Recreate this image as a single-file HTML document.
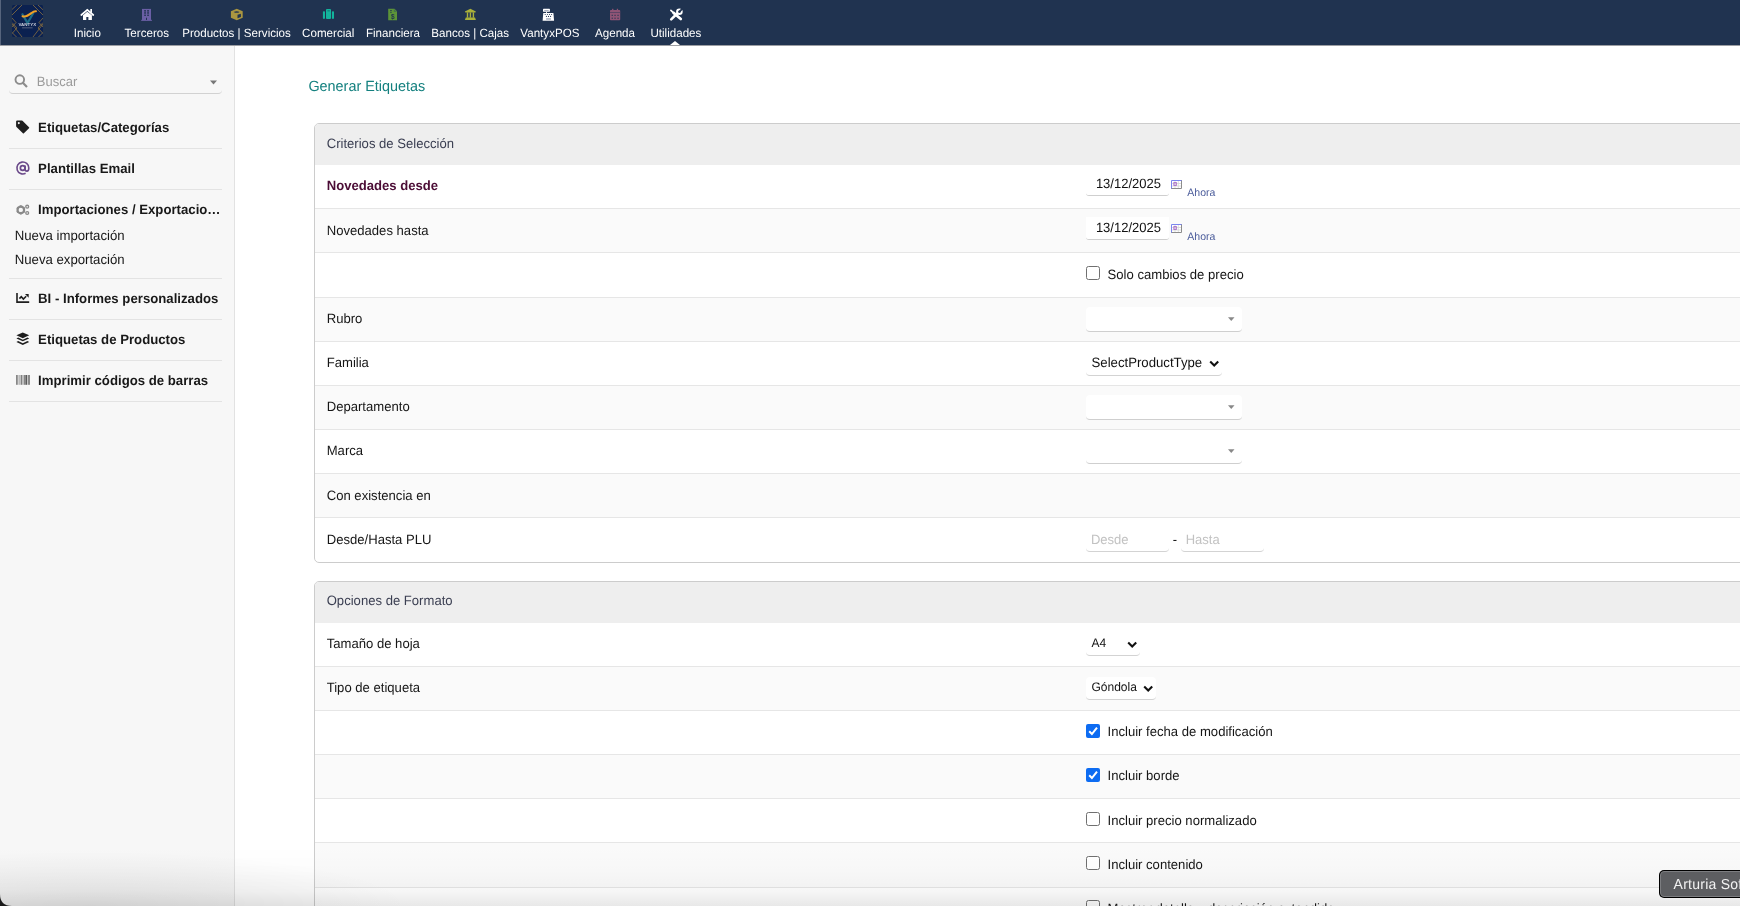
<!DOCTYPE html>
<html><head><meta charset="utf-8">
<style>
*{box-sizing:border-box;margin:0;padding:0}
html,body{width:1740px;height:906px;overflow:hidden;background:#fff;font-family:"Liberation Sans",sans-serif;color:#222;position:relative}
.a{position:absolute}
.t{position:absolute;white-space:nowrap;line-height:20px;text-rendering:geometricPrecision}
svg{display:block}
</style></head><body>
<div id="root" style="position:absolute;left:0;top:0;width:1740px;height:906px;will-change:transform">
<div class="a" style="left:0px;top:0px;width:1740px;height:45px;background:#203350"></div>
<div class="a" style="left:0px;top:45px;width:1740px;height:1px;background:#9c9ea3"></div>
<div class="a" style="left:0px;top:0px;width:1px;height:45px;background:#56647c"></div>
<svg class="a" style="left:12px;top:5px" width="31" height="32" viewBox="0 0 31 32">
<rect x="0" y="0" width="31" height="32" rx="1.5" fill="#0b2150"/>
<g stroke="#9c7b3c" stroke-width="0.7" fill="none">
<path d="M0 4.5 L4.8 0 M0 10 L10 0 M21 0 L31 10 M26 0 L31 4.8 M0 27.5 L4.5 32 M0 19 L10 32 M21 32 L31 19 M26.5 32 L31 27.5"/>
<path d="M0 13 L4 17.5 L0 22 M0 17.5 L5 23 L0 28.5 M31 13 L27 17.5 L31 22 M31 17.5 L26 23 L31 28.5"/>
</g>
<path d="M10 8.5 L15.5 18 L21.5 7.8" stroke="#1d6b86" stroke-width="2.2" fill="none" stroke-linejoin="miter"/>
<path d="M10.5 11.2 C14 12.5 17 10 19.5 8 C21 6.8 22.5 6 24 6.3" stroke="#f0a126" stroke-width="2" fill="none" stroke-linecap="round"/>
<text x="15.3" y="21" font-family="Liberation Sans" font-weight="bold" font-size="3.4" fill="#c8ccd8" text-anchor="middle" textLength="17.6" lengthAdjust="spacingAndGlyphs">VANTYX</text><rect x="10" y="22.4" width="10.6" height="0.9" fill="#5c6584"/>
</svg>
<div class="t" style="left:-62.70px;width:300px;text-align:center;top:23.58px;font-size:11.6px;font-weight:normal;color:#ffffff;transform:scaleY(1.03);transform-origin:0 14.02px;">Inicio</div>
<div class="t" style="left:-3.20px;width:300px;text-align:center;top:23.58px;font-size:11.6px;font-weight:normal;color:#ffffff;transform:scaleY(1.03);transform-origin:0 14.02px;">Terceros</div>
<div class="t" style="left:86.50px;width:300px;text-align:center;top:23.58px;font-size:11.6px;font-weight:normal;color:#ffffff;transform:scaleY(1.03);transform-origin:0 14.02px;">Productos | Servicios</div>
<div class="t" style="left:178.20px;width:300px;text-align:center;top:23.58px;font-size:11.6px;font-weight:normal;color:#ffffff;transform:scaleY(1.03);transform-origin:0 14.02px;">Comercial</div>
<div class="t" style="left:243.00px;width:300px;text-align:center;top:23.58px;font-size:11.6px;font-weight:normal;color:#ffffff;transform:scaleY(1.03);transform-origin:0 14.02px;">Financiera</div>
<div class="t" style="left:320.20px;width:300px;text-align:center;top:23.58px;font-size:11.6px;font-weight:normal;color:#ffffff;transform:scaleY(1.03);transform-origin:0 14.02px;">Bancos | Cajas</div>
<div class="t" style="left:399.90px;width:300px;text-align:center;top:23.58px;font-size:11.6px;font-weight:normal;color:#ffffff;transform:scaleY(1.03);transform-origin:0 14.02px;">VantyxPOS</div>
<div class="t" style="left:465.00px;width:300px;text-align:center;top:23.58px;font-size:11.6px;font-weight:normal;color:#ffffff;transform:scaleY(1.03);transform-origin:0 14.02px;">Agenda</div>
<div class="t" style="left:525.90px;width:300px;text-align:center;top:23.58px;font-size:11.6px;font-weight:normal;color:#ffffff;transform:scaleY(1.03);transform-origin:0 14.02px;">Utilidades</div>
<svg class="a" style="left:79px;top:7px" width="17" height="15" viewBox="79 7 17 15"><path d="M81.3 15 L87.3 9.9 L93.3 15" stroke="#fff" stroke-width="1.7" fill="none" stroke-linecap="round" stroke-linejoin="miter"/><rect x="90.3" y="9" width="1.7" height="3.8" fill="#fff"/><path d="M83 15.3 L87.3 11.8 L91.9 15.3 V19.9 H88.4 V17.1 H86.3 V19.9 H83 Z" fill="#fff"/></svg>
<svg class="a" style="left:140px;top:8px" width="13" height="14" viewBox="140 8 13 14"><rect x="142" y="8.9" width="9" height="11.2" fill="#6a5fa5"/><rect x="141.2" y="19.8" width="10.7" height="1.1" fill="#6a5fa5"/><g fill="#203350"><rect x="144.2" y="10.1" width="1.7" height="1.5"/><rect x="147.2" y="10.1" width="1.7" height="1.5"/><rect x="144.2" y="12.2" width="1.7" height="1.5"/><rect x="147.2" y="12.2" width="1.7" height="1.5"/><rect x="144.2" y="14.6" width="1.7" height="1.3"/><rect x="147.2" y="14.6" width="1.7" height="1.3"/><path d="M146 19.9 V18 Q146.5 17.2 147 18 V19.9 Z"/></g></svg>
<svg class="a" style="left:229px;top:8px" width="16" height="14" viewBox="229 8 16 14"><path d="M236.8 8.8 L242.7 11.3 L242.7 17.8 L236.8 20.2 L230.9 17.8 L230.9 11.3 Z" fill="#aa9640"/><path d="M233.6 11.9 Q236.8 10.6 239.6 11.9 Q236.8 13.6 233.6 11.9 Z" fill="#203350"/><path d="M237.5 14.8 L240.9 13.7 L240.9 17 L237.5 18.3 Z" fill="#203350"/></svg>
<svg class="a" style="left:321px;top:8px" width="15" height="12" viewBox="321 8 15 12"><rect x="322.9" y="11.2" width="2.1" height="7.7" rx="0.8" fill="#13b39c"/><rect x="326" y="9" width="5" height="9.9" rx="0.9" fill="#13b39c"/><rect x="331.9" y="11.2" width="2.1" height="7.7" rx="0.8" fill="#13b39c"/><rect x="327.3" y="10" width="2.6" height="1.6" rx="0.5" fill="#0f8a80"/></svg>
<svg class="a" style="left:387px;top:8px" width="11" height="13" viewBox="387 8 11 13"><path d="M388.2 8.8 H394.5 L397 11.3 V20.3 H388.2 Z" fill="#5c9438"/><path d="M393.8 8.8 V12 H397" fill="#45734a"/><g fill="#203350"><rect x="390.1" y="10" width="1.7" height="0.8"/><rect x="390.1" y="11.8" width="1.7" height="0.8"/></g><text x="392.7" y="18.8" font-size="6.5" font-family="Liberation Sans" font-weight="bold" text-anchor="middle" fill="#203350">$</text></svg>
<svg class="a" style="left:463px;top:8px" width="14" height="13" viewBox="463 8 14 13"><path d="M470.4 8.8 L475.9 11.6 L475.4 12.4 H465.4 L464.9 11.6 Z" fill="#a9b03a"/><rect x="466.8" y="12.4" width="1.4" height="5.3" fill="#a9b03a"/><rect x="469.7" y="12.4" width="1.4" height="5.3" fill="#a9b03a"/><rect x="472.7" y="12.4" width="1.4" height="5.3" fill="#a9b03a"/><path d="M465.8 17.6 H475 L475.9 19.9 H464.9 Z" fill="#a9b03a"/></svg>
<svg class="a" style="left:541px;top:8px" width="15" height="14" viewBox="541 8 15 14"><rect x="543" y="8.8" width="6.9" height="3" rx="0.6" fill="#fff"/><rect x="544.2" y="10" width="4.5" height="0.7" fill="#8a93a8"/><rect x="546.1" y="11.8" width="0.9" height="1.3" fill="#fff"/><path d="M543.3 13 H553.4 L554.1 20.7 H542.6 Z" fill="#fff"/><g fill="#203350"><circle cx="545.2" cy="14.5" r="0.55"/><circle cx="547.4" cy="14.5" r="0.55"/><circle cx="549.5" cy="14.5" r="0.55"/><circle cx="551.6" cy="14.5" r="0.55"/><circle cx="546.4" cy="16.4" r="0.55"/><circle cx="548.5" cy="16.4" r="0.55"/><circle cx="550.6" cy="16.4" r="0.55"/></g><rect x="546.1" y="18.1" width="4.8" height="1.7" fill="#b0b6c4"/></svg>
<svg class="a" style="left:608px;top:8px" width="14" height="14" viewBox="608 8 14 14"><rect x="610" y="10" width="10.2" height="10.3" rx="0.8" fill="#8f5475"/><rect x="612.1" y="8.8" width="1.3" height="2" fill="#8f5475"/><rect x="616.8" y="8.8" width="1.3" height="2" fill="#8f5475"/><rect x="610" y="12.1" width="10.2" height="0.7" fill="#4a4060"/><g fill="#203350"><rect x="611.6" y="14.8" width="1.3" height="1"/><rect x="614.4" y="14.8" width="1.3" height="1"/><rect x="617.4" y="14.8" width="1.3" height="1"/><rect x="611.6" y="17.7" width="1.3" height="1"/><rect x="614.4" y="17.7" width="1.3" height="1"/><rect x="617.4" y="17.7" width="1.3" height="1"/></g></svg>
<svg class="a" style="left:668px;top:7px" width="16" height="15" viewBox="668 7 16 15"><path d="M670.9 10.3 L673.3 12.7" stroke="#fff" stroke-width="1.7" stroke-linecap="round"/><path d="M673.6 12.9 L680.8 19" stroke="#fff" stroke-width="2.7" stroke-linecap="round"/><path d="M671.2 19.4 L677.2 13.5" stroke="#fff" stroke-width="2.5" stroke-linecap="round"/><circle cx="679.4" cy="11.7" r="2.3" stroke="#fff" stroke-width="2" fill="none"/><path d="M679.6 11.5 L683 8.1" stroke="#203350" stroke-width="1.8"/></svg>
<svg class="a" style="left:670px;top:41px" width="10" height="4" viewBox="0 0 10 4"><path d="M0 4 L5 0 L10 4 Z" fill="#fff"/></svg>
<div class="a" style="left:0px;top:46px;width:234px;height:860px;background:#f7f7f7"></div>
<div class="a" style="left:234px;top:46px;width:1px;height:860px;background:#e2e2e2"></div>
<svg class="a" style="left:14px;top:74px" width="14" height="14" viewBox="0 0 14 14"><circle cx="5.8" cy="5.6" r="4.3" stroke="#8c8c8c" stroke-width="1.9" fill="none"/><path d="M8.8 8.7 L13 13" stroke="#8c8c8c" stroke-width="2.2"/></svg>
<div class="t" style="left:36.80px;top:71.90px;font-size:13.0px;font-weight:normal;color:#9b9b9b;transform:scaleY(1.03);transform-origin:0 14.50px;">Buscar</div>
<svg class="a" style="left:209.5px;top:80px" width="7" height="5" viewBox="0 0 7 5"><path d="M0 0.5 H7 L3.5 4.5 Z" fill="#777"/></svg>
<div class="a" style="left:9px;top:70px;width:213px;height:24px;border-bottom:1px solid #d2d2d2;border-radius:0 0 4px 4px"></div>
<div class="t" style="left:38.10px;top:118.23px;font-size:13.2px;font-weight:bold;color:#181818;transform:scaleY(1.03);transform-origin:0 14.57px;">Etiquetas/Categorías</div>
<div class="t" style="left:38.10px;top:159.23px;font-size:13.2px;font-weight:bold;color:#181818;transform:scaleY(1.03);transform-origin:0 14.57px;">Plantillas Email</div>
<div class="t" style="left:38.10px;top:200.23px;font-size:13.2px;font-weight:bold;color:#181818;transform:scaleY(1.03);transform-origin:0 14.57px;">Importaciones / Exportacio…</div>
<div class="t" style="left:38.10px;top:289.33px;font-size:13.2px;font-weight:bold;color:#181818;transform:scaleY(1.03);transform-origin:0 14.57px;">BI - Informes personalizados</div>
<div class="t" style="left:38.10px;top:330.43px;font-size:13.2px;font-weight:bold;color:#181818;transform:scaleY(1.03);transform-origin:0 14.57px;">Etiquetas de Productos</div>
<div class="t" style="left:38.10px;top:371.43px;font-size:13.2px;font-weight:bold;color:#181818;transform:scaleY(1.03);transform-origin:0 14.57px;">Imprimir códigos de barras</div>
<div class="t" style="left:14.70px;top:226.43px;font-size:13.2px;font-weight:normal;color:#161616;transform:scaleY(1.03);transform-origin:0 14.57px;">Nueva importación</div>
<div class="t" style="left:14.70px;top:250.13px;font-size:13.2px;font-weight:normal;color:#161616;transform:scaleY(1.03);transform-origin:0 14.57px;">Nueva exportación</div>
<div class="a" style="left:9px;top:148px;width:213px;height:1px;background:#e3e3e3"></div>
<div class="a" style="left:9px;top:189px;width:213px;height:1px;background:#e3e3e3"></div>
<div class="a" style="left:9px;top:278px;width:213px;height:1px;background:#e3e3e3"></div>
<div class="a" style="left:9px;top:319px;width:213px;height:1px;background:#e3e3e3"></div>
<div class="a" style="left:9px;top:360px;width:213px;height:1px;background:#e3e3e3"></div>
<div class="a" style="left:9px;top:401px;width:213px;height:1px;background:#e3e3e3"></div>
<svg class="a" style="left:14px;top:118px" width="18" height="18" viewBox="14 118 18 18"><path d="M16.1 121.6 Q16.1 120.4 17.3 120.4 L21.6 120.4 Q22.1 120.4 22.5 120.8 L29 127.2 Q29.5 127.7 29 128.2 L23.9 133.3 Q23.4 133.8 22.9 133.3 L16.5 126.9 Q16.1 126.5 16.1 126 Z" fill="#1e1e1e"/><circle cx="18.8" cy="123.1" r="1.05" fill="#f7f7f7"/></svg>
<svg class="a" style="left:14px;top:160px" width="17" height="17" viewBox="14 160 17 17"><circle cx="22.7" cy="168" r="2.35" stroke="#6b4a8a" stroke-width="1.7" fill="none"/><path d="M25.1 165.4 V169.2 Q25.1 171.1 26.9 171.1 Q28.8 171.1 28.8 168 A5.95 5.95 0 1 0 25.6 173.3" stroke="#6b4a8a" stroke-width="1.6" fill="none"/></svg>
<svg class="a" style="left:14px;top:203px" width="18" height="14" viewBox="14 203 18 14"><g transform="translate(20.8 209.9)"><circle r="3.3" stroke="#8a8a8a" stroke-width="2.2" fill="none"/><g fill="#8a8a8a"><rect x="-0.9" y="-4.6" width="1.8" height="2"/><rect x="-0.9" y="-4.6" width="1.8" height="2" transform="rotate(60)"/><rect x="-0.9" y="-4.6" width="1.8" height="2" transform="rotate(120)"/><rect x="-0.9" y="-4.6" width="1.8" height="2" transform="rotate(180)"/><rect x="-0.9" y="-4.6" width="1.8" height="2" transform="rotate(240)"/><rect x="-0.9" y="-4.6" width="1.8" height="2" transform="rotate(300)"/></g></g><circle cx="27.2" cy="206.7" r="1.45" stroke="#8a8a8a" stroke-width="1.3" fill="none"/><circle cx="27.2" cy="213" r="1.45" stroke="#8a8a8a" stroke-width="1.3" fill="none"/></svg>
<svg class="a" style="left:14px;top:291px" width="18" height="14" viewBox="14 291 18 14"><path d="M17 293 V302.1 H29.2" stroke="#1e1e1e" stroke-width="1.6" fill="none"/><path d="M19.4 298.6 L21.3 296.6 L23.4 299 L26.2 296.2" stroke="#1e1e1e" stroke-width="1.6" fill="none"/><path d="M25 294.1 H28.7 V297.8 Z" fill="#1e1e1e"/></svg>
<svg class="a" style="left:14px;top:330px" width="18" height="18" viewBox="14 330 18 18"><path d="M22.8 332.4 L29.2 335.3 L22.8 338.3 L16.4 335.3 Z" fill="#1e1e1e"/><path d="M16.4 338.4 L18.2 337.6 L22.8 339.7 L27.4 337.6 L29.2 338.4 L22.8 341.3 Z" fill="#1e1e1e"/><path d="M16.4 341.9 L18.2 341.1 L22.8 343.2 L27.4 341.1 L29.2 341.9 L22.8 345.1 Z" fill="#1e1e1e"/></svg>
<svg class="a" style="left:14px;top:373px" width="18" height="14" viewBox="14 373 18 14"><rect x="16.1" y="375" width="1.6" height="9.8" fill="#7a7a7a"/><rect x="18" y="375" width="1.1" height="9.8" fill="#cfcfcf"/><rect x="19.1" y="375" width="1.7" height="9.8" fill="#b5b5b5"/><rect x="21" y="375" width="1" height="9.8" fill="#808080"/><rect x="22.1" y="375" width="1.8" height="9.8" fill="#b8b8b8"/><rect x="24" y="375" width="1.9" height="9.8" fill="#858585"/><rect x="25.9" y="375" width="1.1" height="9.8" fill="#5a5a5a"/><rect x="27.2" y="375" width="0.7" height="9.8" fill="#b0b0b0"/><rect x="28.1" y="375" width="1.8" height="9.8" fill="#7e7e7e"/></svg>
<div class="t" style="left:308.40px;top:77.21px;font-size:14.4px;font-weight:normal;color:#14807f;transform:scaleY(1.03);transform-origin:0 14.99px;">Generar Etiquetas</div>
<div class="a" style="left:314px;top:123px;width:1500px;height:440px;border:1px solid #cccccc;border-radius:5px;background:#fff;overflow:hidden"><div class="a" style="left:0;top:0;right:0;height:41px;background:#eeeeee"></div></div>
<div class="a" style="left:315px;top:209px;width:1425px;height:43px;background:#fafafa"></div>
<div class="a" style="left:315px;top:298px;width:1425px;height:43px;background:#fafafa"></div>
<div class="a" style="left:315px;top:386px;width:1425px;height:43px;background:#fafafa"></div>
<div class="a" style="left:315px;top:474px;width:1425px;height:43px;background:#fafafa"></div>
<div class="a" style="left:315px;top:208px;width:1425px;height:1px;background:#e6e6e6"></div>
<div class="a" style="left:315px;top:252px;width:1425px;height:1px;background:#e6e6e6"></div>
<div class="a" style="left:315px;top:297px;width:1425px;height:1px;background:#e6e6e6"></div>
<div class="a" style="left:315px;top:341px;width:1425px;height:1px;background:#e6e6e6"></div>
<div class="a" style="left:315px;top:385px;width:1425px;height:1px;background:#e6e6e6"></div>
<div class="a" style="left:315px;top:429px;width:1425px;height:1px;background:#e6e6e6"></div>
<div class="a" style="left:315px;top:473px;width:1425px;height:1px;background:#e6e6e6"></div>
<div class="a" style="left:315px;top:517px;width:1425px;height:1px;background:#e6e6e6"></div>
<div class="t" style="left:326.70px;top:134.26px;font-size:13.1px;font-weight:normal;color:#3b3f52;transform:scaleY(1.03);transform-origin:0 14.54px;">Criterios de Selección</div>
<div class="a" style="left:314px;top:581px;width:1500px;height:620px;border:1px solid #cccccc;border-radius:5px;background:#fff;overflow:hidden"><div class="a" style="left:0;top:0;right:0;height:41px;background:#eeeeee"></div></div>
<div class="a" style="left:315px;top:667px;width:1425px;height:43px;background:#fafafa"></div>
<div class="a" style="left:315px;top:755px;width:1425px;height:43px;background:#fafafa"></div>
<div class="a" style="left:315px;top:843px;width:1425px;height:44px;background:#fafafa"></div>
<div class="a" style="left:315px;top:666px;width:1425px;height:1px;background:#e6e6e6"></div>
<div class="a" style="left:315px;top:710px;width:1425px;height:1px;background:#e6e6e6"></div>
<div class="a" style="left:315px;top:754px;width:1425px;height:1px;background:#e6e6e6"></div>
<div class="a" style="left:315px;top:798px;width:1425px;height:1px;background:#e6e6e6"></div>
<div class="a" style="left:315px;top:842px;width:1425px;height:1px;background:#e6e6e6"></div>
<div class="a" style="left:315px;top:887px;width:1425px;height:1px;background:#e6e6e6"></div>
<div class="t" style="left:326.70px;top:591.16px;font-size:13.1px;font-weight:normal;color:#3b3f52;transform:scaleY(1.03);transform-origin:0 14.54px;">Opciones de Formato</div>
<div class="t" style="left:326.70px;top:175.96px;font-size:13.1px;font-weight:bold;color:#4b0c35;transform:scaleY(1.03);transform-origin:0 14.54px;">Novedades desde</div>
<div class="t" style="left:326.70px;top:220.86px;font-size:13.1px;font-weight:normal;color:#161616;transform:scaleY(1.03);transform-origin:0 14.54px;">Novedades hasta</div>
<div class="t" style="left:326.70px;top:309.26px;font-size:13.1px;font-weight:normal;color:#161616;transform:scaleY(1.03);transform-origin:0 14.54px;">Rubro</div>
<div class="t" style="left:326.70px;top:353.46px;font-size:13.1px;font-weight:normal;color:#161616;transform:scaleY(1.03);transform-origin:0 14.54px;">Familia</div>
<div class="t" style="left:326.70px;top:397.26px;font-size:13.1px;font-weight:normal;color:#161616;transform:scaleY(1.03);transform-origin:0 14.54px;">Departamento</div>
<div class="t" style="left:326.70px;top:441.16px;font-size:13.1px;font-weight:normal;color:#161616;transform:scaleY(1.03);transform-origin:0 14.54px;">Marca</div>
<div class="t" style="left:326.70px;top:486.26px;font-size:13.1px;font-weight:normal;color:#161616;transform:scaleY(1.03);transform-origin:0 14.54px;">Con existencia en</div>
<div class="t" style="left:326.70px;top:530.26px;font-size:13.1px;font-weight:normal;color:#161616;transform:scaleY(1.03);transform-origin:0 14.54px;">Desde/Hasta PLU</div>
<div class="t" style="left:326.70px;top:634.06px;font-size:13.1px;font-weight:normal;color:#161616;transform:scaleY(1.03);transform-origin:0 14.54px;">Tamaño de hoja</div>
<div class="t" style="left:326.70px;top:678.16px;font-size:13.1px;font-weight:normal;color:#161616;transform:scaleY(1.03);transform-origin:0 14.54px;">Tipo de etiqueta</div>
<div class="a" style="left:1086px;top:173px;width:83px;height:23px;background:#fff;border-bottom:1px solid #cfcfcf;border-radius:0 0 3px 3px"></div>
<div class="t" style="left:1095.90px;top:174.30px;font-size:13.0px;font-weight:normal;color:#111;transform:scaleY(1.03);transform-origin:0 14.50px;">13/12/2025</div>
<svg class="a" style="left:1171px;top:180px" width="11" height="9" viewBox="0 0 11 9"><rect x="0" y="0" width="11" height="9" fill="#fff"/><path d="M1 3.5 H10 M1 6 H10 M4 1 V8 M7.3 1 V8" stroke="#d6d6d6" stroke-width="0.8"/><rect x="2.9" y="2.6" width="2.4" height="2.8" fill="none" stroke="#a86cc8" stroke-width="1"/><path d="M0.5 9 V0.5 H11" stroke="#7b86ee" stroke-width="1" fill="none"/><path d="M0.5 8.5 H10.5 V0.5" stroke="#8c8c8c" stroke-width="1" fill="none"/></svg>
<div class="t" style="left:1187.30px;top:182.56px;font-size:10.5px;font-weight:normal;color:#4a5b9a;transform:scaleY(1.03);transform-origin:0 13.64px;">Ahora</div>
<div class="a" style="left:1086px;top:217px;width:83px;height:23px;background:#fff;border-bottom:1px solid #cfcfcf;border-radius:0 0 3px 3px"></div>
<div class="t" style="left:1095.90px;top:218.30px;font-size:13.0px;font-weight:normal;color:#111;transform:scaleY(1.03);transform-origin:0 14.50px;">13/12/2025</div>
<svg class="a" style="left:1171px;top:224px" width="11" height="9" viewBox="0 0 11 9"><rect x="0" y="0" width="11" height="9" fill="#fff"/><path d="M1 3.5 H10 M1 6 H10 M4 1 V8 M7.3 1 V8" stroke="#d6d6d6" stroke-width="0.8"/><rect x="2.9" y="2.6" width="2.4" height="2.8" fill="none" stroke="#a86cc8" stroke-width="1"/><path d="M0.5 9 V0.5 H11" stroke="#7b86ee" stroke-width="1" fill="none"/><path d="M0.5 8.5 H10.5 V0.5" stroke="#8c8c8c" stroke-width="1" fill="none"/></svg>
<div class="t" style="left:1187.30px;top:226.56px;font-size:10.5px;font-weight:normal;color:#4a5b9a;transform:scaleY(1.03);transform-origin:0 13.64px;">Ahora</div>
<svg class="a" style="left:1086px;top:266px" width="14" height="14" viewBox="0 0 14 14"><rect x="0.5" y="0.5" width="13" height="13" rx="2" fill="#fff" stroke="#707070" stroke-width="1"/></svg>
<div class="t" style="left:1107.60px;top:265.26px;font-size:13.1px;font-weight:normal;color:#161616;transform:scaleY(1.03);transform-origin:0 14.54px;">Solo cambios de precio</div>
<div class="a" style="left:1086px;top:307px;width:156px;height:25px;background:#fff;border-bottom:1px solid #cfcfcf;border-radius:4px"></div>
<svg class="a" style="left:1228px;top:317px" width="7" height="5" viewBox="0 0 7 5"><path d="M0 0.3 H6.5 L3.25 4 Z" fill="#888"/></svg>
<div class="a" style="left:1086px;top:395px;width:156px;height:25px;background:#fff;border-bottom:1px solid #cfcfcf;border-radius:4px"></div>
<svg class="a" style="left:1228px;top:405px" width="7" height="5" viewBox="0 0 7 5"><path d="M0 0.3 H6.5 L3.25 4 Z" fill="#888"/></svg>
<div class="a" style="left:1086px;top:439px;width:156px;height:25px;background:#fff;border-bottom:1px solid #cfcfcf;border-radius:4px"></div>
<svg class="a" style="left:1228px;top:449px" width="7" height="5" viewBox="0 0 7 5"><path d="M0 0.3 H6.5 L3.25 4 Z" fill="#888"/></svg>
<div class="a" style="left:1086px;top:352px;width:136px;height:23.5px;background:#fff;border-bottom:1px solid #d3d3d3;border-radius:4px"></div>
<div class="t" style="left:1091.50px;top:353.23px;font-size:13.2px;font-weight:normal;color:#111;transform:scaleY(1.03);transform-origin:0 14.57px;">SelectProductType</div>
<svg class="a" style="left:1208.6px;top:359.8px" width="11" height="8" viewBox="0 0 11 8"><path d="M1.2 1.4 L5.2 5.4 L9.2 1.4" stroke="#111" stroke-width="2.1" fill="none"/></svg>
<div class="a" style="left:1086px;top:633px;width:54px;height:23px;background:#fff;border-bottom:1px solid #d3d3d3;border-radius:4px"></div>
<div class="t" style="left:1091.50px;top:632.64px;font-size:12.0px;font-weight:normal;color:#111;transform:scaleY(1.03);transform-origin:0 14.16px;">A4</div>
<svg class="a" style="left:1126.6px;top:640.5px" width="11" height="8" viewBox="0 0 11 8"><path d="M1.2 1.4 L5.2 5.4 L9.2 1.4" stroke="#111" stroke-width="2.1" fill="none"/></svg>
<div class="a" style="left:1086px;top:677px;width:70px;height:23px;background:#fff;border-bottom:1px solid #d3d3d3;border-radius:4px"></div>
<div class="t" style="left:1091.50px;top:676.64px;font-size:12.0px;font-weight:normal;color:#111;transform:scaleY(1.03);transform-origin:0 14.16px;">Góndola</div>
<svg class="a" style="left:1142.6px;top:684.5px" width="11" height="8" viewBox="0 0 11 8"><path d="M1.2 1.4 L5.2 5.4 L9.2 1.4" stroke="#111" stroke-width="2.1" fill="none"/></svg>
<div class="a" style="left:1086px;top:525px;width:83px;height:27px;background:#fff;border-bottom:1px solid #d3d3d3;border-radius:0 0 4px 4px"></div>
<div class="t" style="left:1090.90px;top:530.10px;font-size:13.0px;font-weight:normal;color:#c2c2c2;transform:scaleY(1.03);transform-origin:0 14.50px;">Desde</div>
<div class="t" style="left:1172.80px;top:530.10px;font-size:13.0px;font-weight:normal;color:#111;transform:scaleY(1.03);transform-origin:0 14.50px;">-</div>
<div class="a" style="left:1181px;top:525px;width:83px;height:27px;background:#fff;border-bottom:1px solid #d3d3d3;border-radius:0 0 4px 4px"></div>
<div class="t" style="left:1185.70px;top:530.10px;font-size:13.0px;font-weight:normal;color:#c2c2c2;transform:scaleY(1.03);transform-origin:0 14.50px;">Hasta</div>
<svg class="a" style="left:1086px;top:724px" width="14" height="14" viewBox="0 0 14 14"><rect x="0" y="0" width="14" height="14" rx="2" fill="#0d6cf2"/><path d="M3.2 7.3 L5.9 10 L11 3.6" stroke="#fff" stroke-width="2" fill="none"/></svg>
<div class="t" style="left:1107.50px;top:722.26px;font-size:13.1px;font-weight:normal;color:#161616;transform:scaleY(1.03);transform-origin:0 14.54px;">Incluir fecha de modificación</div>
<svg class="a" style="left:1086px;top:768px" width="14" height="14" viewBox="0 0 14 14"><rect x="0" y="0" width="14" height="14" rx="2" fill="#0d6cf2"/><path d="M3.2 7.3 L5.9 10 L11 3.6" stroke="#fff" stroke-width="2" fill="none"/></svg>
<div class="t" style="left:1107.50px;top:766.46px;font-size:13.1px;font-weight:normal;color:#161616;transform:scaleY(1.03);transform-origin:0 14.54px;">Incluir borde</div>
<svg class="a" style="left:1086px;top:812px" width="14" height="14" viewBox="0 0 14 14"><rect x="0.5" y="0.5" width="13" height="13" rx="2" fill="#fff" stroke="#707070" stroke-width="1"/></svg>
<div class="t" style="left:1107.50px;top:810.76px;font-size:13.1px;font-weight:normal;color:#161616;transform:scaleY(1.03);transform-origin:0 14.54px;">Incluir precio normalizado</div>
<svg class="a" style="left:1086px;top:856px" width="14" height="14" viewBox="0 0 14 14"><rect x="0.5" y="0.5" width="13" height="13" rx="2" fill="#fff" stroke="#707070" stroke-width="1"/></svg>
<div class="t" style="left:1107.50px;top:854.96px;font-size:13.1px;font-weight:normal;color:#161616;transform:scaleY(1.03);transform-origin:0 14.54px;">Incluir contenido</div>
<svg class="a" style="left:1086px;top:900px" width="14" height="14" viewBox="0 0 14 14"><rect x="0.5" y="0.5" width="13" height="13" rx="2" fill="#fff" stroke="#707070" stroke-width="1"/></svg>
<div class="t" style="left:1107.50px;top:899.26px;font-size:13.1px;font-weight:normal;color:#161616;transform:scaleY(1.03);transform-origin:0 14.54px;">Mostrar detalle y descripción extendida</div>
<div class="a" style="left:0px;top:846px;width:1740px;height:60px;background:radial-gradient(ellipse 320px 55px at 90px 60px, rgba(0,0,0,0.07), rgba(0,0,0,0) 100%), linear-gradient(to bottom, rgba(0,0,0,0) 0%, rgba(0,0,0,0.012) 40%, rgba(0,0,0,0.035) 75%, rgba(0,0,0,0.09) 100%)"></div>
<svg class="a" style="left:0px;top:894px" width="12" height="12" viewBox="0 0 12 12"><path d="M0 0 Q0 12 12 12 L0 12 Z" fill="#1a1a1a"/></svg>
<div class="a" style="left:1659px;top:870px;width:120px;height:28px;background:#000;border-radius:5px"></div>
<div class="a" style="left:1660px;top:871px;width:118px;height:26px;background:#5d5e61;border:1px solid #7c7d80;border-radius:4px"></div>
<div class="t" style="left:1673.60px;top:873.85px;font-size:14px;font-weight:normal;color:#f2f2f2;transform:scaleY(1.03);transform-origin:0 14.85px;letter-spacing:0.25px">Arturia Software Center</div>
</div>
</body></html>
